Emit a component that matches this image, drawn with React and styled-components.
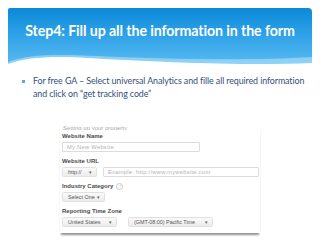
import React from 'react'
import styled, { createGlobalStyle } from 'styled-components'

const Global = createGlobalStyle`
  html, body {
    margin: 0;
    padding: 0;
    background: #ffffff;
  }
  body {
    width: 320px;
    height: 240px;
    overflow: hidden;
  }
`

const Slide = styled.div`
  width: 320px;
  height: 240px;
  display: flex;
  flex-direction: column;
  background: #ffffff;
  font-family: Lato, 'Open Sans', sans-serif;
`

const Header = styled.div`
  position: relative;
  margin: 8px 8px 0 8px;
  height: 60px;
  border-radius: 2px 4px 0 0;
  overflow: hidden;
  display: flex;
  justify-content: center;
  padding-top: 14px;
  box-sizing: border-box;
  background: linear-gradient(180deg, #0b89d8 0%, #2fa2e8 45%, #5dbdf1 100%);
`

const Wave = styled.svg`
  position: absolute;
  left: 0;
  bottom: 0;
  width: 304px;
  height: 14px;
`

const Title = styled.h1`
  position: relative;
  margin: 0;
  font-size: 14.2px;
  font-weight: 700;
  color: #ffffff;
  letter-spacing: -0.1px;
  white-space: nowrap;
`

const Bullets = styled.ul`
  list-style: none;
  margin: 7px 0 0 0;
  padding: 0 0 0 33px;
`

const Bullet = styled.li`
  position: relative;
  font-size: 8.9px;
  line-height: 12.5px;
  letter-spacing: -0.1px;
  color: #34507a;
  width: 282px;
  &::before {
    content: '';
    position: absolute;
    left: -11px;
    top: 5px;
    width: 3px;
    height: 3px;
    background: #5aa9e6;
  }
`

const Shot = styled.div`
  margin: 26px 0 0 60px;
  width: 200px;
  height: 107px;
  display: flex;
  flex-direction: column;
  padding: 0 0 0 2px;
  box-sizing: border-box;
  font-family: 'Liberation Sans', Arial, sans-serif;
  background: #ffffff;
  overflow: hidden;
  box-shadow: 0 3px 2px -1px #8e8e8e;
`

const Cut = styled.div`
  height: 5px;
  overflow: hidden;
  font-size: 6px;
  line-height: 6px;
  color: #a8a8a8;
  margin-top: -1px;
  margin-bottom: 2px;
  padding-left: 1px;
`

const Label = styled.div`
  font-size: 6px;
  font-weight: 700;
  color: #4a4a4a;
  line-height: 8px;
  display: flex;
  align-items: center;
  gap: 3px;
  margin-top: ${p => p.$top || 0}px;
`

const Help = styled.span`
  width: 5px;
  height: 5px;
  border: 0.6px solid #c8c8c8;
  border-radius: 50%;
  font-size: 4px;
  line-height: 5px;
  text-align: center;
  color: #bbbbbb;
  font-weight: 400;
`

const Row = styled.div`
  display: flex;
  gap: ${p => p.$gap || 6}px;
  margin-top: 2px;
`

const Input = styled.div`
  width: ${p => p.$w}px;
  height: 10px;
  box-sizing: border-box;
  border: 1px solid #dcdcdc;
  border-radius: 1px;
  font-size: 5.8px;
  line-height: 8px;
  padding-left: 4px;
  color: #b3b3b3;
  white-space: nowrap;
  overflow: hidden;
  letter-spacing: 0.25px;
`

const Select = styled.div`
  width: ${p => p.$w}px;
  height: 10px;
  box-sizing: border-box;
  border: 1px solid #e0e0e0;
  border-radius: 1.5px;
  background: linear-gradient(180deg, #fafafa, #ececec);
  font-size: 5.4px;
  line-height: 8px;
  padding: 0 4px 0 5px;
  color: #555555;
  display: flex;
  justify-content: space-between;
  white-space: nowrap;
  &::after {
    content: '▾';
    font-size: 5px;
    color: #666666;
  }
`

export default function App() {
  return (
    <Slide>
      <Global />
      <Header>
        <Wave viewBox="0 0 304 14" preserveAspectRatio="none">
          <path d="M0 8 C 20 0, 50 0, 90 2 C 150 5, 240 7, 304 3 L304 14 L0 14 Z" fill="#ffffff" opacity="0.35" />
          <path d="M0 10 C 20 3, 45 2, 80 4 C 150 8, 240 12, 304 9 L304 14 L0 14 Z" fill="#ffffff" />
        </Wave>
        <Title>Step4: Fill up all the information in the form</Title>
      </Header>
      <Bullets>
        <Bullet>
          For free GA – Select universal Analytics and fille all required information and click on “get tracking code”
        </Bullet>
      </Bullets>
      <Shot>
        <Cut>Setting up your property</Cut>
        <Label>Website Name</Label>
        <Row>
          <Input $w={138}>My New Website</Input>
        </Row>
        <Label $top={5}>Website URL</Label>
        <Row>
          <Select $w={35}>http://</Select>
          <Input $w={156}>Example: http://www.mywebsite.com</Input>
        </Row>
        <Label $top={5}>
          Industry Category <Help>?</Help>
        </Label>
        <Row>
          <Select $w={43}>Select One</Select>
        </Row>
        <Label $top={5}>Reporting Time Zone</Label>
        <Row $gap={11}>
          <Select $w={55}>United States</Select>
          <Select $w={85}>(GMT-08:00) Pacific Time</Select>
        </Row>
      </Shot>
    </Slide>
  )
}
